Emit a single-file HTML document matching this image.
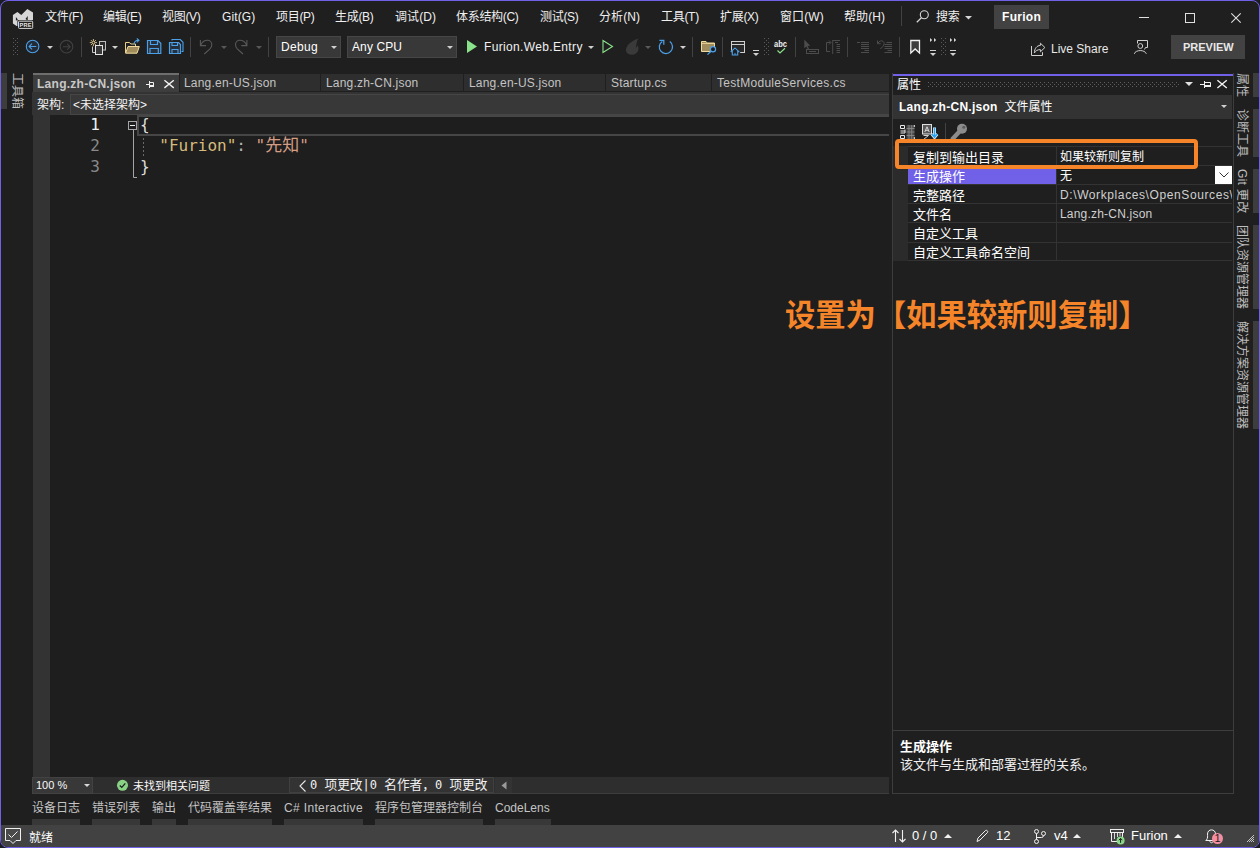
<!DOCTYPE html>
<html lang="zh-CN">
<head>
<meta charset="utf-8">
<title>Furion - Visual Studio</title>
<style>
*{box-sizing:border-box;margin:0;padding:0}
html,body{width:1260px;height:848px;overflow:hidden;background:#1b1d22}
body{font-family:"Liberation Sans","Noto Sans CJK SC",sans-serif;font-size:12px;color:#f2f2f2}
#win{position:absolute;left:0;top:0;width:1260px;height:848px;background:#1f1f1f;border:1px solid #7160e8;border-radius:8px;overflow:hidden}
#in{position:absolute;left:-1px;top:-1px;width:1260px;height:848px}
.a{position:absolute}
.t{position:absolute;white-space:nowrap;line-height:16px;font-size:12px}
.b{font-weight:bold}
.mono{font-family:"DejaVu Sans Mono","Liberation Mono","Noto Sans CJK SC",monospace}
svg{position:absolute;overflow:visible}
.sep{position:absolute;width:1px;background:#424242}
.vt{position:absolute;writing-mode:vertical-rl;text-orientation:sideways;white-space:nowrap;font-size:12px;line-height:14px;color:#bebebe}
.bt{position:absolute;top:800px;line-height:16px;font-size:12px;color:#c4c4c4;white-space:nowrap}
.bs{position:absolute;top:819px;height:6px;background:#383838}
.m{top:9px;color:#f0f0f0;letter-spacing:-0.3px}
.it{top:75px;color:#c4c4c4}
.ln{left:60px;width:40px;text-align:right;color:#8a8a8a;font-size:16px;line-height:21px}
.cd{font-size:16px;line-height:21px}
.pn{left:913px;font-size:13px;line-height:18px;color:#fff}
.pv{left:1060px;color:#fff}
.rs{left:1253px;width:6px;background:#3d3d3d}
.cj{font-size:12.700px}
</style>
</head>
<body>
<div id="win"><div id="in">
<svg class="a" style="left:12px;top:8px" width="22" height="21" viewBox="0 0 22 21">
<path d="M0.9 7.1 L5.4 3.9 L9.3 6.9 L15.3 1 L21 4.4 L21 12.5 L5.8 12.5 L5.8 18 L4.6 18 L0.9 15.4 Z" fill="#d6d6d6"/>
<path d="M3.9 8.9 L3.9 12.7 L5.9 11.4 Z M15.7 7.9 L13.5 11.1 L15.7 12.4 Z" fill="#1f1f1f"/>
<rect x="5.5" y="12.2" width="16" height="9" fill="#1f1f1f"/>
<rect x="6.5" y="13.2" width="14.2" height="7.2" rx="0.8" fill="#1f1f1f" stroke="#d6d6d6" stroke-width="1"/>
<text x="13.7" y="19.1" font-family="Liberation Sans, sans-serif" font-size="5.6" font-weight="bold" fill="#e4e4e4" text-anchor="middle" letter-spacing="0.3">PRE</text>
</svg>
<span class="t m" style="left:45px">文件(F)</span>
<span class="t m" style="left:103px">编辑(E)</span>
<span class="t m" style="left:162px">视图(V)</span>
<span class="t m" style="left:222px;letter-spacing:0.1px">Git(G)</span>
<span class="t m" style="left:276px">项目(P)</span>
<span class="t m" style="left:335px">生成(B)</span>
<span class="t m" style="left:395px;letter-spacing:0.1px">调试(D)</span>
<span class="t m" style="left:456px">体系结构(C)</span>
<span class="t m" style="left:540px">测试(S)</span>
<span class="t m" style="left:599px;letter-spacing:0.1px">分析(N)</span>
<span class="t m" style="left:661px">工具(T)</span>
<span class="t m" style="left:720px">扩展(X)</span>
<span class="t m" style="left:780px;letter-spacing:0.1px">窗口(W)</span>
<span class="t m" style="left:844px;letter-spacing:0.1px">帮助(H)</span>
<div class="sep" style="left:901px;top:6px;height:20px"></div>
<svg class="a" style="left:916px;top:10px" width="14" height="13" viewBox="0 0 14 13"><circle cx="8.3" cy="4.8" r="4" fill="none" stroke="#d6d6d6" stroke-width="1.1"/><path d="M5.4 7.8 L0.8 12.2" stroke="#d6d6d6" stroke-width="1.2" fill="none"/></svg>
<span class="t m" style="left:936px">搜索</span>
<svg class="a" style="left:965px;top:16px" width="7" height="4" viewBox="0 0 7 4"><path d="M0 0 L7 0 L3.5 3.5 Z" fill="#d6d6d6"/></svg>
<div class="a" style="left:994px;top:5px;width:55px;height:24px;background:#424242"></div>
<span class="t b" style="left:1002px;top:9px;color:#fff;letter-spacing:0.3px">Furion</span>
<svg class="a" style="left:1139px;top:12px" width="103" height="12" viewBox="0 0 103 12">
<path d="M0 5.5 H10" stroke="#e0e0e0" stroke-width="1"/>
<rect x="46.5" y="1.5" width="9" height="9" fill="none" stroke="#e0e0e0" stroke-width="1"/>
<path d="M92.300 1.300 L101.700 10.700 M101.700 1.300 L92.300 10.700" stroke="#e0e0e0" stroke-width="1.100" fill="none"/>
</svg>
<svg class="a" style="left:0;top:30px" width="1260" height="35" viewBox="0 30 1260 35">
<defs>
<pattern id="gd" x="13" y="38" width="4" height="4" patternUnits="userSpaceOnUse"><rect x="0" y="0" width="1" height="1" fill="#5a5a5a"/><rect x="2" y="2" width="1" height="1" fill="#5a5a5a"/></pattern>
<path id="dd" d="M0 0 L6 0 L3 3 Z"/>
</defs>
<!-- grips -->
<path d="M13.5 38 V56 M17.5 38 V56" stroke="#5a5a5a" stroke-width="1" stroke-dasharray="1 3" fill="none"/><path d="M15.5 40 V56" stroke="#5a5a5a" stroke-width="1" stroke-dasharray="1 3" fill="none"/>
<path d="M764.5 38 V56 M768.5 38 V56" stroke="#5a5a5a" stroke-width="1" stroke-dasharray="1 3" fill="none"/><path d="M766.5 40 V56" stroke="#5a5a5a" stroke-width="1" stroke-dasharray="1 3" fill="none"/>
<path d="M941.5 38 V56 M945.5 38 V56" stroke="#5a5a5a" stroke-width="1" stroke-dasharray="1 3" fill="none"/><path d="M943.5 40 V56" stroke="#5a5a5a" stroke-width="1" stroke-dasharray="1 3" fill="none"/>
<!-- back -->
<circle cx="32.600" cy="46.500" r="6.300" fill="#222b36" stroke="#4ca0e8" stroke-width="1.100"/>
<path d="M36.300 46.500 H29.300 M32 43.600 L29.100 46.500 L32 49.400" fill="none" stroke="#4ca0e8" stroke-width="1.1"/>
<use href="#dd" x="47" y="46" fill="#d0d0d0"/>
<circle cx="66.500" cy="46.7" r="6.3" fill="none" stroke="#404040" stroke-width="1.1"/>
<path d="M62.900 46.7 H69.900 M67.200 43.8 L70.100 46.7 L67.200 49.6" fill="none" stroke="#404040" stroke-width="1.1"/>
<rect x="81" y="37" width="1" height="20" fill="#424242"/>
<!-- new item -->
<rect x="99.500" y="41.500" width="6" height="8.500" fill="#2a2a2a" stroke="#bcbcbc" stroke-width="1"/>
<path d="M92.500 46.500 V52.500 H96" fill="none" stroke="#c8c8c8" stroke-width="1"/>
<rect x="95.500" y="45.500" width="7" height="9" fill="#383838" stroke="#e4e4e4" stroke-width="1"/>
<path d="M93.400 39 V46.200 M89.800 42.600 H97 M90.900 40.100 L95.900 45.100 M95.900 40.100 L90.900 45.100" stroke="#f5dc9a" stroke-width="0.800" fill="none"/>
<circle cx="93.400" cy="42.600" r="0.900" fill="#1f1f1f"/>
<use href="#dd" x="112" y="46" fill="#d0d0d0"/>
<!-- open -->
<path d="M125.500 53 V42.500 H129.500 L130.800 44 H135.500 V46" fill="none" stroke="#e8d08c" stroke-width="1"/>
<path d="M125.600 53.200 L128 46.500 H139.300 L137 53.200 Z" fill="#a08c5c" stroke="#f0dc9c" stroke-width="1" stroke-linejoin="round"/>
<path d="M134 44.500 C134 41.500 136 40.300 138.800 40.300 M136.800 38.500 L139 40.300 L136.800 42.300" fill="none" stroke="#4ca0e8" stroke-width="1.050"/>
<!-- save -->
<path d="M147.500 40.500 H158 L160.800 43.300 V53.500 H147.500 Z" fill="#25303c" stroke="#4ca0e8" stroke-width="1.2"/>
<path d="M150.500 40.500 V44.500 H157.500 V40.500 M150 53.500 V48.500 H158.300 V53.500" fill="none" stroke="#4ca0e8" stroke-width="1.2"/>
<!-- save all -->
<path d="M172 40.500 V39.500 H180.300 L183 42.300 V51.500 H181.500" fill="none" stroke="#4ca0e8" stroke-width="1.1"/>
<path d="M169.500 42.500 H178.500 L180.500 44.500 V53.500 H169.500 Z" fill="#25303c" stroke="#4ca0e8" stroke-width="1.2"/>
<path d="M172 42.500 V45.500 H177.500 V42.500 M172 53.500 V49.500 H178 V53.500" fill="none" stroke="#4ca0e8" stroke-width="1.1"/>
<rect x="190" y="37" width="1" height="20" fill="#424242"/>
<!-- undo / redo -->
<path d="M200.400 40 V45.600 H206 M200.700 45.300 C202 42 205 40.300 207.500 40.300 C210 40.300 211.800 42.300 211.800 44.800 C211.800 46.500 211 47.800 210 48.800 L204.300 54" fill="none" stroke="#585858" stroke-width="1.100"/>
<use href="#dd" x="221" y="46" fill="#585858"/>
<path d="M246.900 40 V45.600 H241.300 M246.600 45.300 C245.300 42 242.300 40.300 239.800 40.300 C237.300 40.300 235.500 42.300 235.500 44.800 C235.500 46.500 236.300 47.800 237.300 48.800 L243 54" fill="none" stroke="#585858" stroke-width="1.100"/>
<use href="#dd" x="256" y="46" fill="#585858"/>
<rect x="268" y="37" width="1" height="20" fill="#424242"/>
<!-- combos -->
<rect x="276.500" y="36.500" width="64" height="21" fill="#383838" stroke="#464646" stroke-width="1"/>
<use href="#dd" x="331" y="46" fill="#d0d0d0"/>
<rect x="347.500" y="36.500" width="109" height="21" fill="#383838" stroke="#464646" stroke-width="1"/>
<use href="#dd" x="447" y="46" fill="#d0d0d0"/>
<!-- play -->
<path d="M467 40 L477 46.500 L467 53 Z" fill="#8ae28a"/>
<use href="#dd" x="588" y="46" fill="#d0d0d0"/>
<path d="M603 40.500 L612.500 46.500 L603 52.500 Z" fill="none" stroke="#8ae28a" stroke-width="1.1" stroke-linejoin="miter"/>
<!-- fire -->
<path d="M638.300 38.600 C635 39.300 630 42.500 627.300 46 C624 50.500 627 55 632 54.800 C637.500 54.600 640 49.500 637.600 45.300 C637.300 46.500 636.600 47.300 635.800 47.600 C636.500 44.500 636.500 41.500 638.300 38.600 Z" fill="#3a3a3a"/>
<use href="#dd" x="645" y="46" fill="#5a5a5a"/>
<!-- restart -->
<path d="M669.800 41.600 A6.600 6.600 0 1 1 662.300 41.400" fill="none" stroke="#4ca0e8" stroke-width="1.250"/>
<path d="M659.400 40.400 H663.800 V44.800" fill="none" stroke="#4ca0e8" stroke-width="1.250"/>
<use href="#dd" x="680" y="46" fill="#d0d0d0"/>
<rect x="692" y="37" width="1" height="20" fill="#424242"/>
<!-- folder search -->
<path d="M701.500 51.500 V41.500 H706 L707.300 43 H714.500 V51.500 Z" fill="#a08c5c" stroke="#f0dc9c" stroke-width="1" stroke-linejoin="round"/>
<path d="M702 43.500 H714.500" stroke="#f0dc9c" stroke-width="0.800"/>
<circle cx="713" cy="49.300" r="2.600" fill="#1f1f1f" stroke="#4ca0e8" stroke-width="1.200"/>
<path d="M711 51.300 L707.500 54.600" stroke="#4ca0e8" stroke-width="1.300"/>
<rect x="722" y="37" width="1" height="20" fill="#424242"/>
<!-- window home -->
<rect x="731.500" y="41.500" width="13" height="11" fill="#2a2a2a" stroke="#d0d0d0" stroke-width="1"/>
<path d="M731.500 44.500 H744.500" stroke="#d0d0d0" stroke-width="1"/>
<path d="M729.500 53 L735 46.500 L740.500 53 V56 H729.500 Z" fill="#1f1f1f"/>
<path d="M730.800 52 L735 47.900 L739.200 52 M732.300 51 V55 H737.700 V51" fill="none" stroke="#4ca0e8" stroke-width="1.100"/>
<rect x="734.500" y="53" width="1" height="2" fill="#4ca0e8"/>
<!-- overflow -->
<rect x="753" y="50" width="6" height="1" fill="#d0d0d0"/><use href="#dd" x="753" y="53" fill="#d0d0d0"/>
<!-- abc check -->
<text x="774" y="46.700" font-family="Liberation Sans, sans-serif" font-size="8.500" font-weight="bold" fill="#f0f0f0" textLength="13" lengthAdjust="spacingAndGlyphs">abc</text>
<path d="M777.500 50.500 L780 53 L785 48.300" fill="none" stroke="#8ae28a" stroke-width="1.200"/>
<rect x="795" y="37" width="1" height="20" fill="#424242"/>
<!-- disabled icons -->
<path d="M804.300 39.500 V48.300 L806.300 46.500 L807.800 49.300 L809 48.700 L807.600 46 L810.200 45.700 Z" fill="#4c4c4c"/>
<rect x="806.500" y="49.500" width="12" height="4" fill="none" stroke="#4c4c4c" stroke-width="1"/>
<path d="M809 51.500 H816" stroke="#4c4c4c" stroke-width="1"/>
<path d="M830 51.500 H826.500 V42.500 H830.500 M829 40.500 L831 42.500 L829 44.500" stroke="#4c4c4c" stroke-width="1" fill="none"/>
<path d="M832.700 40 V54 M832.700 40.500 H840 M835 42.500 H838 M836.500 44.500 H840 M836.500 46.500 H840 M836.500 48.500 H840 M836.500 50.500 H840 M836.500 52.500 H840" stroke="#4c4c4c" stroke-width="1" fill="none"/>
<rect x="847" y="37" width="1" height="20" fill="#424242"/>
<path d="M857 42.500 H860 M861 42.500 H869 M861 44.500 H869 M861 46.500 H869 M861 48.500 H869 M864.500 50.500 H869 M861 52.500 H869" stroke="#4c4c4c" stroke-width="1" fill="none"/>
<path d="M886.500 42.500 H892 M884.500 44.500 H892 M884.500 46.500 H892 M884.500 48.500 H892 M887.500 50.500 H892 M884.500 52.500 H892" stroke="#4c4c4c" stroke-width="1" fill="none"/>
<path d="M877.500 40.500 V43.700 H880.700 M877.800 43.400 C879 41 881.500 40.300 883 41.300 C884.800 42.500 884.300 44.800 883 46.200 L880.300 49" stroke="#4c4c4c" stroke-width="1" fill="none"/>
<rect x="899" y="37" width="1" height="20" fill="#424242"/>
<!-- bookmark -->
<path d="M910.800 40.500 H919.500 V53 L915.150 49 L910.800 53 Z" fill="#3c3c3c" stroke="#f0f0f0" stroke-width="1.300"/>
<!-- overflow chevrons -->
<path d="M930 38 L932.200 40 L930 42 Z M934 38 L936.200 40 L934 42 Z" fill="#d8d8d8"/>
<rect x="930" y="50" width="6" height="1" fill="#d0d0d0"/><use href="#dd" x="930" y="53" fill="#d0d0d0"/>
<path d="M950 38 L952.200 40 L950 42 Z M954 38 L956.200 40 L954 42 Z" fill="#d8d8d8"/>
<rect x="950" y="50" width="6" height="1" fill="#d0d0d0"/><use href="#dd" x="950" y="53" fill="#d0d0d0"/>
<!-- live share -->
<path d="M1031.500 46 V55.500 H1042.500 V52.200" fill="none" stroke="#d0d0d0" stroke-width="1"/>
<path d="M1040.400 43.200 L1044.900 47.500 L1040.400 51.800 V49.600 C1037.500 49.600 1035.500 50.800 1034.400 53 C1034.400 48.500 1036.800 45.600 1040.400 45.400 Z" fill="none" stroke="#d0d0d0" stroke-width="1" stroke-linejoin="round"/>
<!-- feedback -->
<path d="M1137.500 43.500 V40.500 H1147.500 V47.500 H1145.500 L1144.500 49.500" fill="none" stroke="#d0d0d0" stroke-width="1"/>
<circle cx="1140.300" cy="46" r="2.400" fill="#1f1f1f" stroke="#d0d0d0" stroke-width="1"/>
<path d="M1134.300 53.800 C1135.500 49.500 1145 49.500 1146.300 53.800" fill="none" stroke="#d0d0d0" stroke-width="1"/>
<!-- preview -->
<rect x="1171" y="35" width="74" height="24" fill="#424242"/>
</svg>
<span class="t" style="left:281px;top:39px;letter-spacing:0.35px;color:#fff">Debug</span>
<span class="t" style="left:352px;top:39px;letter-spacing:0.1px;color:#fff">Any CPU</span>
<span class="t" style="left:484px;top:39px;letter-spacing:0.35px;color:#f0f0f0">Furion.Web.Entry</span>
<span class="t" style="left:1051px;top:41px;color:#e8e8e8">Live Share</span>
<span class="t b" style="left:1183px;top:39px;font-size:11px;color:#e8e8e8">PREVIEW</span>
<div class="a" style="left:1px;top:73px;width:6px;height:36px;background:#3d3d3d"></div>
<span class="vt" style="left:10px;top:73px">工具箱</span>
<div class="a" style="left:33px;top:73px;width:146px;height:19px;background:#3d3d3d;border-top:2px solid #6e6e6e"></div>
<span class="t b" style="left:37px;top:76px;color:#c8c8c8;letter-spacing:0.27px">Lang.zh-CN.json</span>
<svg class="a" style="left:146px;top:80px" width="28" height="9" viewBox="0 0 28 9">
<path d="M0 4.500 H3.500 M3.500 1 V8 M3.500 2.500 H7.500 V6 M3.500 5.500 H8 M3.500 6.500 H8" fill="none" stroke="#f0f0f0" stroke-width="1"/>
<path d="M18.400 0.200 L27.800 7.900 M27.800 0.200 L18.400 7.900" fill="none" stroke="#f0f0f0" stroke-width="1.400"/>
</svg>
<div class="a" style="left:180px;top:74px;width:140px;height:17px;background:#2e2e2e"></div>
<div class="a" style="left:321px;top:74px;width:142px;height:17px;background:#2e2e2e"></div>
<div class="a" style="left:464px;top:74px;width:141px;height:17px;background:#2e2e2e"></div>
<div class="a" style="left:606px;top:74px;width:105px;height:17px;background:#2e2e2e"></div>
<div class="a" style="left:712px;top:74px;width:177px;height:17px;background:#2e2e2e"></div>
<span class="t it" style="left:184px;letter-spacing:0.2px">Lang.en-US.json</span>
<span class="t it" style="left:326px;letter-spacing:0.2px">Lang.zh-CN.json</span>
<span class="t it" style="left:469px;letter-spacing:0.2px">Lang.en-US.json</span>
<span class="t it" style="left:611px;letter-spacing:0.2px">Startup.cs</span>
<span class="t it" style="left:717px;letter-spacing:0.29px">TestModuleServices.cs</span>
<!-- schema bar -->
<div class="a" style="left:32px;top:92px;width:857px;height:23px;background:#333"></div>
<div class="a" style="left:70px;top:94px;width:819px;height:21px;background:#383838;border:1px solid #464646;border-right:0"></div>
<span class="t" style="left:37px;top:97px;color:#f4f4f4">架构:</span>
<span class="t" style="left:73px;top:97px;color:#f4f4f4">&lt;未选择架构&gt;</span>
<div class="a" style="left:33px;top:115px;width:856px;height:662px;background:#1e1e1e"></div>
<div class="a" style="left:33px;top:115px;width:17px;height:662px;background:#333"></div>
<div class="a" style="left:137px;top:115px;width:752px;height:21px;border:2px solid #464646;border-right:0"></div>
<span class="t mono ln" style="top:114px;color:#f0f0f0">1</span>
<span class="t mono ln" style="top:135px">2</span>
<span class="t mono ln" style="top:156px">3</span>
<svg class="a" style="left:128px;top:121px" width="20" height="58" viewBox="0 0 20 58">
<rect x="0.500" y="0.500" width="8" height="8" fill="#1e1e1e" stroke="#a5a5a5" stroke-width="1"/>
<path d="M2 4.500 H7" stroke="#f0f0f0" stroke-width="1"/>
<path d="M5.500 9 V56.500 H9" fill="none" stroke="#a5a5a5" stroke-width="1"/>
<path d="M15.500 17 V37" stroke="#6a6a6a" stroke-width="1" stroke-dasharray="2 2"/>
</svg>
<span class="t mono cd" style="left:140px;top:114px;color:#dcdcdc">{</span>
<span class="t mono cd" style="left:140px;top:135px;color:#d7ba7d">&nbsp;&nbsp;"Furion"<span style="color:#b4b4b4">:</span> <span style="color:#d69d85">"<span style="font-size:17px;line-height:1">先知</span>"</span></span>
<span class="t mono cd" style="left:140px;top:156px;color:#dcdcdc">}</span>
<!-- editor bottom bar -->
<div class="a" style="left:33px;top:777px;width:856px;height:17px;background:#2e2e2e;border-bottom:1px solid #3d3d3d"></div>
<div class="a" style="left:32px;top:777px;width:61px;height:17px;background:#383838;border:1px solid #424242"></div>
<span class="t" style="left:36px;top:777px;font-size:11px;color:#f8f8f8">100 %</span>
<svg class="a" style="left:84px;top:784px" width="7" height="4" viewBox="0 0 7 4"><path d="M0 0 H6 L3 3 Z" fill="#d8d8d8"/></svg>
<svg class="a" style="left:116px;top:779px" width="13" height="13" viewBox="0 0 13 13"><circle cx="6.500" cy="6.300" r="5.500" fill="#89d185"/><path d="M3.800 6.500 L5.800 8.400 L9.300 4.400" fill="none" stroke="#1f1f1f" stroke-width="1.300"/></svg>
<span class="t" style="left:133px;top:778px;font-size:11px;color:#f8f8f8">未找到相关问题</span>
<div class="a" style="left:289px;top:777px;width:205px;height:16px;background:#333;border:1px solid #404040"></div>
<svg class="a" style="left:299px;top:780px" width="8" height="12" viewBox="0 0 8 12"><path d="M6.500 0.500 L1 6 L6.500 11.500" fill="none" stroke="#e8e8e8" stroke-width="1.100"/></svg>
<span class="t mono" style="left:310px;top:777px;font-size:12px;color:#f0f0f0">0 <span class="cj">项更改</span>|0 <span class="cj">名作者，</span>0 <span class="cj">项更改</span></span>
<div class="a" style="left:495px;top:777px;width:17px;height:16px;background:#333"></div>
<svg class="a" style="left:501px;top:781px" width="6" height="9" viewBox="0 0 6 9"><path d="M5.500 0.500 V8.500 L0.500 4.500 Z" fill="#9a9a9a"/></svg>
<div class="a" style="left:892px;top:73px;width:342px;height:721px;border:1px solid #3d3d3d;border-top:0"></div>
<div class="a" style="left:893px;top:74px;width:340px;height:2px;background:#7160e8"></div>
<span class="t" style="left:897px;top:77px;color:#fff">属性</span>
<svg class="a" style="left:928px;top:82px" width="252" height="5" viewBox="0 0 252 5"><defs><pattern id="gp" x="0" y="0" width="4" height="4" patternUnits="userSpaceOnUse"><rect x="0" y="0" width="1" height="1" fill="#5e5e5e"/><rect x="2" y="2" width="1" height="1" fill="#5e5e5e"/></pattern></defs><rect x="0" y="0" width="251" height="5" fill="url(#gp)"/></svg>
<svg class="a" style="left:1185px;top:79px" width="43" height="11" viewBox="0 0 43 11">
<path d="M0 3 H8 L4 7 Z" fill="#e0e0e0"/>
<path d="M15 5.500 H19.500 M19.500 2 V9 M19.500 3.500 H25.500 V7 M19.500 6.500 H26 M19.500 7.500 H26" fill="none" stroke="#f0f0f0" stroke-width="1"/>
<path d="M32.400 1.300 L41.800 9 M41.800 1.300 L32.400 9" fill="none" stroke="#f0f0f0" stroke-width="1.400"/>
</svg>
<div class="a" style="left:893px;top:95px;width:339px;height:24px;background:#333"></div>
<span class="t" style="left:899px;top:99px;color:#fff"><b style="letter-spacing:0.27px">Lang.zh-CN.json</b>&nbsp; 文件属性</span>
<svg class="a" style="left:1221px;top:105px" width="7" height="4" viewBox="0 0 7 4"><path d="M0 0 H6 L3 3 Z" fill="#d0d0d0"/></svg>
<!-- toolbar icons -->
<svg class="a" style="left:900px;top:124px" width="70" height="16" viewBox="0 0 70 16">
<path d="M0.500 1.500 H4.500 V4.500 H0.500 Z M0.500 7 H5 M5 5.500 V9 M0.500 9 H5 M0.500 11.500 H4.500 V14.500 H0.500 Z" fill="none" stroke="#e8e8e8" stroke-width="1"/>
<rect x="6.500" y="1" width="8" height="14.500" fill="#4a4a4a"/>
<path d="M6.500 4.500 H14.500 M6.500 8 H14.500 M6.500 11.500 H14.500 M9 1 V15.500 M11.700 1 V15.500" fill="none" stroke="#8e8e8e" stroke-width="0.800"/>
<path d="M14.300 1 V3 M14.300 13 V15.500" stroke="#e8e8e8" stroke-width="1"/>
<rect x="22.500" y="0.500" width="9" height="9.500" fill="#5a5a5a" stroke="#e0e0e0" stroke-width="1"/>
<path d="M24.800 8 L27 2.800 L29.200 8 M25.500 6.300 H28.500" fill="none" stroke="#d8d8d8" stroke-width="1"/>
<path d="M23.500 11.500 H28.500 L23.500 15.500 H28.500" fill="none" stroke="#d0d0d0" stroke-width="1"/>
<path d="M34.500 3.500 V12.500 M31.800 10 L34.500 13.300 L37.200 10" fill="none" stroke="#f0f0f0" stroke-width="3"/>
<path d="M34.500 3.500 V12.500 M31.800 10 L34.500 13.300 L37.200 10" fill="none" stroke="#2aa4f0" stroke-width="1.600"/>
<rect x="45" y="-1" width="1" height="16" fill="#424242"/>
<path d="M59.500 7.500 L51.800 15.800" stroke="#8c8c8c" stroke-width="4.300" fill="none"/>
<circle cx="62" cy="4.800" r="5" fill="#8c8c8c"/>
<circle cx="63.800" cy="3.300" r="1.500" fill="#5c5c5c"/>
</svg>
<!-- grid -->
<div class="a" style="left:893px;top:146px;width:15px;height:115px;background:#2b2b2b"></div>
<div class="a" style="left:908px;top:146px;width:324px;height:115px;background:
 linear-gradient(#333,#333) 0 0/100% 1px no-repeat,
 linear-gradient(#333,#333) 0 19px/100% 1px no-repeat,
 linear-gradient(#333,#333) 0 38px/100% 1px no-repeat,
 linear-gradient(#333,#333) 0 57px/100% 1px no-repeat,
 linear-gradient(#333,#333) 0 76px/100% 1px no-repeat,
 linear-gradient(#333,#333) 0 96px/100% 1px no-repeat,
 linear-gradient(#333,#333) 0 114px/100% 1px no-repeat,
 linear-gradient(#333,#333) 148px 0/1px 100% no-repeat"></div>
<div class="a" style="left:908px;top:166px;width:148px;height:18px;background:#7160e8"></div>
<span class="t pn" style="top:149px">复制到输出目录</span>
<span class="t pn" style="top:168px">生成操作</span>
<span class="t pn" style="top:187px">完整路径</span>
<span class="t pn" style="top:206px">文件名</span>
<span class="t pn" style="top:225px">自定义工具</span>
<span class="t pn" style="top:244px">自定义工具命名空间</span>
<span class="t pv" style="top:149px">如果较新则复制</span>
<span class="t pv" style="top:168px">无</span>
<span class="t pv" style="top:187px;color:#d0d0d0;letter-spacing:0.6px;width:172px;overflow:hidden">D:\Workplaces\OpenSources\Furion</span>
<span class="t pv" style="top:206px;color:#d0d0d0;letter-spacing:0.2px">Lang.zh-CN.json</span>
<div class="a" style="left:1215px;top:166px;width:17px;height:18px;background:#fff"></div>
<svg class="a" style="left:1218.500px;top:172px" width="10" height="6" viewBox="0 0 10 6"><path d="M0.500 0.500 L5 5 L9.500 0.500" fill="none" stroke="#333" stroke-width="1"/></svg>
<!-- description -->
<div class="a" style="left:893px;top:730px;width:340px;height:1px;background:#3d3d3d"></div>
<span class="t b" style="left:900px;top:739px;font-size:13px;color:#fff">生成操作</span>
<span class="t" style="left:900px;top:757px;font-size:13px;color:#f0f0f0">该文件与生成和部署过程的关系。</span>
<span class="vt" style="left:1235px;top:73px">属性</span>
<span class="vt" style="left:1235px;top:109px">诊断工具</span>
<span class="vt" style="left:1235px;top:169px;letter-spacing:0.3px">Git 更改</span>
<span class="vt" style="left:1235px;top:225px">团队资源管理器</span>
<span class="vt" style="left:1235px;top:321px">解决方案资源管理器</span>
<div class="a rs" style="top:73px;height:24px"></div>
<div class="a rs" style="top:109px;height:48px"></div>
<div class="a rs" style="top:169px;height:44px"></div>
<div class="a rs" style="top:225px;height:84px"></div>
<div class="a rs" style="top:321px;height:108px"></div>
<span class="bt" style="left:32px">设备日志</span>
<span class="bt" style="left:92px">错误列表</span>
<span class="bt" style="left:152px">输出</span>
<span class="bt" style="left:188px">代码覆盖率结果</span>
<span class="bt" style="left:284px;letter-spacing:0.35px">C# Interactive</span>
<span class="bt" style="left:375px">程序包管理器控制台</span>
<span class="bt" style="left:495px">CodeLens</span>
<div class="bs" style="left:32px;width:48px"></div>
<div class="bs" style="left:92px;width:48px"></div>
<div class="bs" style="left:152px;width:24px"></div>
<div class="bs" style="left:188px;width:84px"></div>
<div class="bs" style="left:284px;width:79px"></div>
<div class="bs" style="left:375px;width:108px"></div>
<div class="bs" style="left:495px;width:56px"></div>
<div class="a" style="left:0;top:825px;width:1260px;height:23px;background:#424242"></div>
<svg class="a" style="left:5px;top:828px" width="17" height="17" viewBox="0 0 17 17"><path d="M0.500 0.500 H15.500 V12.500 H11 L8 15.500 L5 12.500 H0.500 Z" fill="#4a4a4a" stroke="#f0f0f0" stroke-width="1"/><path d="M3.500 6.500 L6.500 9.500 L12.500 3.500" fill="none" stroke="#f0f0f0" stroke-width="1"/></svg>
<span class="t" style="left:29px;top:830px;color:#fff">就绪</span>
<svg class="a" style="left:890px;top:827px" width="370" height="19" viewBox="890 827 370 19">
<path d="M895.500 842 V830 M892.500 833 L895.500 830 L898.500 833 M902.500 830 V842 M899.500 839 L902.500 842 L905.500 839" fill="none" stroke="#f0f0f0" stroke-width="1.100"/>
<path d="M944 838 H952 L948 834 Z" fill="#f0f0f0"/>
<path d="M977 841.500 L978 838 L985.500 830.500 C986.500 829.500 988.500 831.500 987.500 832.500 L980 840 Z" fill="none" stroke="#f0f0f0" stroke-width="1"/>
<circle cx="1036.500" cy="831.500" r="2" fill="none" stroke="#f0f0f0" stroke-width="1"/>
<circle cx="1036.500" cy="841.500" r="2" fill="none" stroke="#f0f0f0" stroke-width="1"/>
<circle cx="1043.500" cy="833.500" r="2" fill="none" stroke="#f0f0f0" stroke-width="1"/>
<path d="M1036.500 833.500 V839.500 M1036.500 837.500 H1041.500 Q1043.500 837.500 1043.500 835.500" fill="none" stroke="#f0f0f0" stroke-width="1"/>
<path d="M1073 838 H1081 L1077 834 Z" fill="#f0f0f0"/>
<rect x="1110.500" y="829.500" width="13" height="3" fill="none" stroke="#f0f0f0" stroke-width="1"/>
<path d="M1111.500 832.500 V841.500 H1118 M1122.500 832.500 V837" fill="none" stroke="#f0f0f0" stroke-width="1"/>
<path d="M1114.500 833 V839 M1117.500 833 V837 M1120 833 V836" fill="none" stroke="#d8d8d8" stroke-width="1"/>
<circle cx="1120.600" cy="840.400" r="4" fill="#8bd88b"/>
<path d="M1120.600 842.800 V838.600 M1118.900 840.200 L1120.600 838.400 L1122.300 840.200" fill="none" stroke="#1a1a1a" stroke-width="1"/>
<path d="M1174 838 H1182 L1178 834 Z" fill="#f0f0f0"/>
<path d="M1205.500 840.500 H1217 M1206.500 840 C1208 838 1207.500 836 1207.500 834 C1207.500 828.500 1215.500 828.500 1215.500 834 C1215.500 836 1215 838 1216.500 840 M1209.500 841.500 Q1211.500 844 1213.500 841.500" fill="none" stroke="#f0f0f0" stroke-width="1"/>
<circle cx="1217.500" cy="838.500" r="5.500" fill="#f48ea0"/>
<defs><pattern id="ck" x="0" y="0" width="2" height="2" patternUnits="userSpaceOnUse"><rect x="0" y="0" width="1" height="1" fill="#c4c4c4"/><rect x="1" y="1" width="1" height="1" fill="#c4c4c4"/></pattern></defs>
<path d="M1245.500 842 L1254 833.500 V842 Z" fill="url(#ck)" shape-rendering="crispEdges"/>
</svg>
<span class="t" style="left:912px;top:828px;font-size:13px;color:#fff">0 / 0</span>
<span class="t" style="left:996px;top:828px;font-size:13px;color:#fff">12</span>
<span class="t" style="left:1054px;top:828px;font-size:13px;color:#fff">v4</span>
<span class="t" style="left:1131px;top:828px;font-size:13px;color:#fff">Furion</span>
<span class="t" style="left:1214.500px;top:830px;font-size:11px;color:#1f1f1f">1</span>
<div class="a" style="left:895px;top:139px;width:303px;height:30px;border:4px solid #f6852a;border-radius:4px"></div>
<span class="t" style="left:785px;top:295px;font-size:30.300px;line-height:42px;font-weight:bold;color:#f6852a;font-family:'Liberation Sans','Noto Sans CJK SC',sans-serif">设置为【如果较新则复制】</span>
</div></div>
</body>
</html>
